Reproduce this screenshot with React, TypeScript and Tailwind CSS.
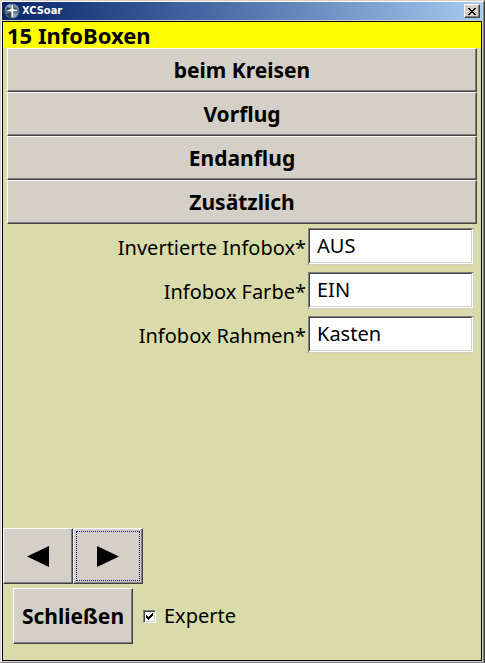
import React from "react";

const raised =
  "border border-t-white border-l-white border-r-[#404040] border-b-[#404040] shadow-[inset_-1px_-1px_0_#808080] bg-[#d4d0c8]";

const pages = ["beim Kreisen", "Vorflug", "Endanflug", "Zusätzlich"];

const fields = [
  { id: "inverse", label: "Invertierte Infobox*", value: "AUS" },
  { id: "colors", label: "Infobox Farbe*", value: "EIN" },
  { id: "border", label: "Infobox Rahmen*", value: "Kasten" },
];

function AppIcon() {
  return (
    <svg viewBox="0 0 16 16" className="h-4 w-4" aria-hidden="true">
      <circle cx="8" cy="8" r="7.5" fill="#5c7890" />
      <path d="M1 6a7.500 7.500 0 0 1 5-5l1 3-2 4z" fill="#8fa9bd" />
      <path d="M10 1a7.500 7.500 0 0 1 5 5l-4 1z" fill="#6d879d" />
      <path d="M3 4l3 1v2H2zM10 4l3 2-2 1z" fill="#33404c" />
      <path d="M2 11l5-2v6a7 7 0 0 1-5-4z" fill="#35424f" />
      <path d="M9 10l5 1a7 7 0 0 1-5 4z" fill="#8ea3b4" />
      <path d="M7.500 2h1.500v4l4 1v1l-4 .5v5.500h-1.500v-5.500l-4-.5v-1l4-1z" fill="#fff" />
    </svg>
  );
}

export default function App() {
  return (
    <div className="flex h-screen flex-col border border-t-[#d4d0c8] border-r-[#404040] border-b-[#808080] border-l-[#d4d0c8] font-['Noto_Sans','Open_Sans',sans-serif] text-black">
      <div className="flex flex-1 flex-col border-t border-r border-l border-t-white border-r-[#808080] border-l-white bg-[#d4d0c8] pr-px pb-px">
        <header className="flex h-[18px] shrink-0 items-center bg-linear-to-r from-[#0a246a] to-[#a6caf0] pr-0.5 pl-0.5">
          <AppIcon />
          <h1 className="ml-0.5 flex-1 font-['DejaVu_Sans_Condensed','DejaVu_Sans',sans-serif] text-[11px] leading-4 font-bold text-white">
            XCSoar
          </h1>
          <button type="button" aria-label="Schließen" className={`flex h-3.5 w-4 items-center justify-center ${raised}`}>
            <svg viewBox="0 0 8 7" className="h-[7px] w-2" shapeRendering="crispEdges" aria-hidden="true">
              <path d="M0 0h2v1h1v1h2v-1h1v-1h2v1h-1v1h-1v1h-1v1h1v1h1v1h1v1h-2v-1h-1v-1h-2v1h-1v1h-2v-1h1v-1h1v-1h1v-1h-1v-1h-1v-1h-1z" />
            </svg>
          </button>
        </header>

        <main className="mt-px flex flex-1 flex-col border border-black bg-[#d9dbaa]">
          <h2 className="h-[26px] bg-[#ffff00] pl-1 text-[22px] leading-[26px] font-bold">15 InfoBoxen</h2>

          <nav className="flex flex-col pr-1 pl-1">
            {pages.map((page) => (
              <button key={page} type="button" className={`h-11 text-[21px] leading-7 font-bold ${raised}`}>
                {page}
              </button>
            ))}
          </nav>

          <form className="flex flex-col gap-[7px] pt-1 pr-[7px]">
            {fields.map((field) => (
              <div key={field.id} className="flex h-[37px] items-center justify-end gap-0.5">
                <label htmlFor={field.id} className="pt-0.5 text-[20px] leading-7">
                  {field.label}
                </label>
                <div className="h-full w-[166px] border border-t-[#808080] border-r-[#d4d0c8] border-b-[#d4d0c8] border-l-[#808080] bg-white pr-px pb-px">
                  <input
                    id={field.id}
                    defaultValue={field.value}
                    className="block h-full w-full border border-t-[#404040] border-r-[#d4d0c8] border-b-[#d4d0c8] border-l-[#404040] bg-white pb-0.5 pl-[7px] text-[20px] leading-7 outline-none"
                  />
                </div>
              </div>
            ))}
          </form>

          <footer className="mt-auto pb-4">
            <div className="flex">
              <button type="button" aria-label="Zurück" className={`flex h-14 w-[70px] items-center justify-center ${raised}`}>
                <svg viewBox="0 0 22 21" className="h-[21px] w-[22px]" aria-hidden="true">
                  <path d="M0 10.500L22 0v21z" />
                </svg>
              </button>
              <button type="button" aria-label="Weiter" className={`flex h-14 w-[70px] p-0.5 ${raised}`}>
                <span className="flex h-full w-full items-center justify-center border border-dotted border-[#0a0a80]">
                  <svg viewBox="0 0 22 21" className="h-[21px] w-[22px]" aria-hidden="true">
                    <path d="M22 10.500L0 0v21z" />
                  </svg>
                </span>
              </button>
            </div>
            <div className="mt-1 flex items-center pl-[10px]">
              <button type="button" className={`h-14 w-[120px] text-[21px] leading-7 font-bold ${raised}`}>
                Schließen
              </button>
              <label className="ml-[10px] flex items-center gap-2 text-[20px] leading-7">
                <span className="grid h-[13px] w-[13px]">
                  <input
                    type="checkbox"
                    defaultChecked
                    className="peer col-start-1 row-start-1 h-[13px] w-[13px] appearance-none border border-t-[#808080] border-r-white border-b-white border-l-[#808080] bg-white shadow-[inset_1px_1px_0_#404040,inset_-1px_-1px_0_#d4d0c8]"
                  />
                  <svg
                    viewBox="0 0 13 13"
                    shapeRendering="crispEdges"
                    className="pointer-events-none invisible col-start-1 row-start-1 peer-checked:visible"
                    aria-hidden="true"
                  >
                    <path d="M3 5h1v1h1v1h1v-1h1v-1h1v-1h1v-1h1v3h-1v1h-1v1h-1v1h-1v1h-1v-1h-1v-1h-1z" />
                  </svg>
                </span>
                Experte
              </label>
            </div>
          </footer>
        </main>
      </div>
    </div>
  );
}
